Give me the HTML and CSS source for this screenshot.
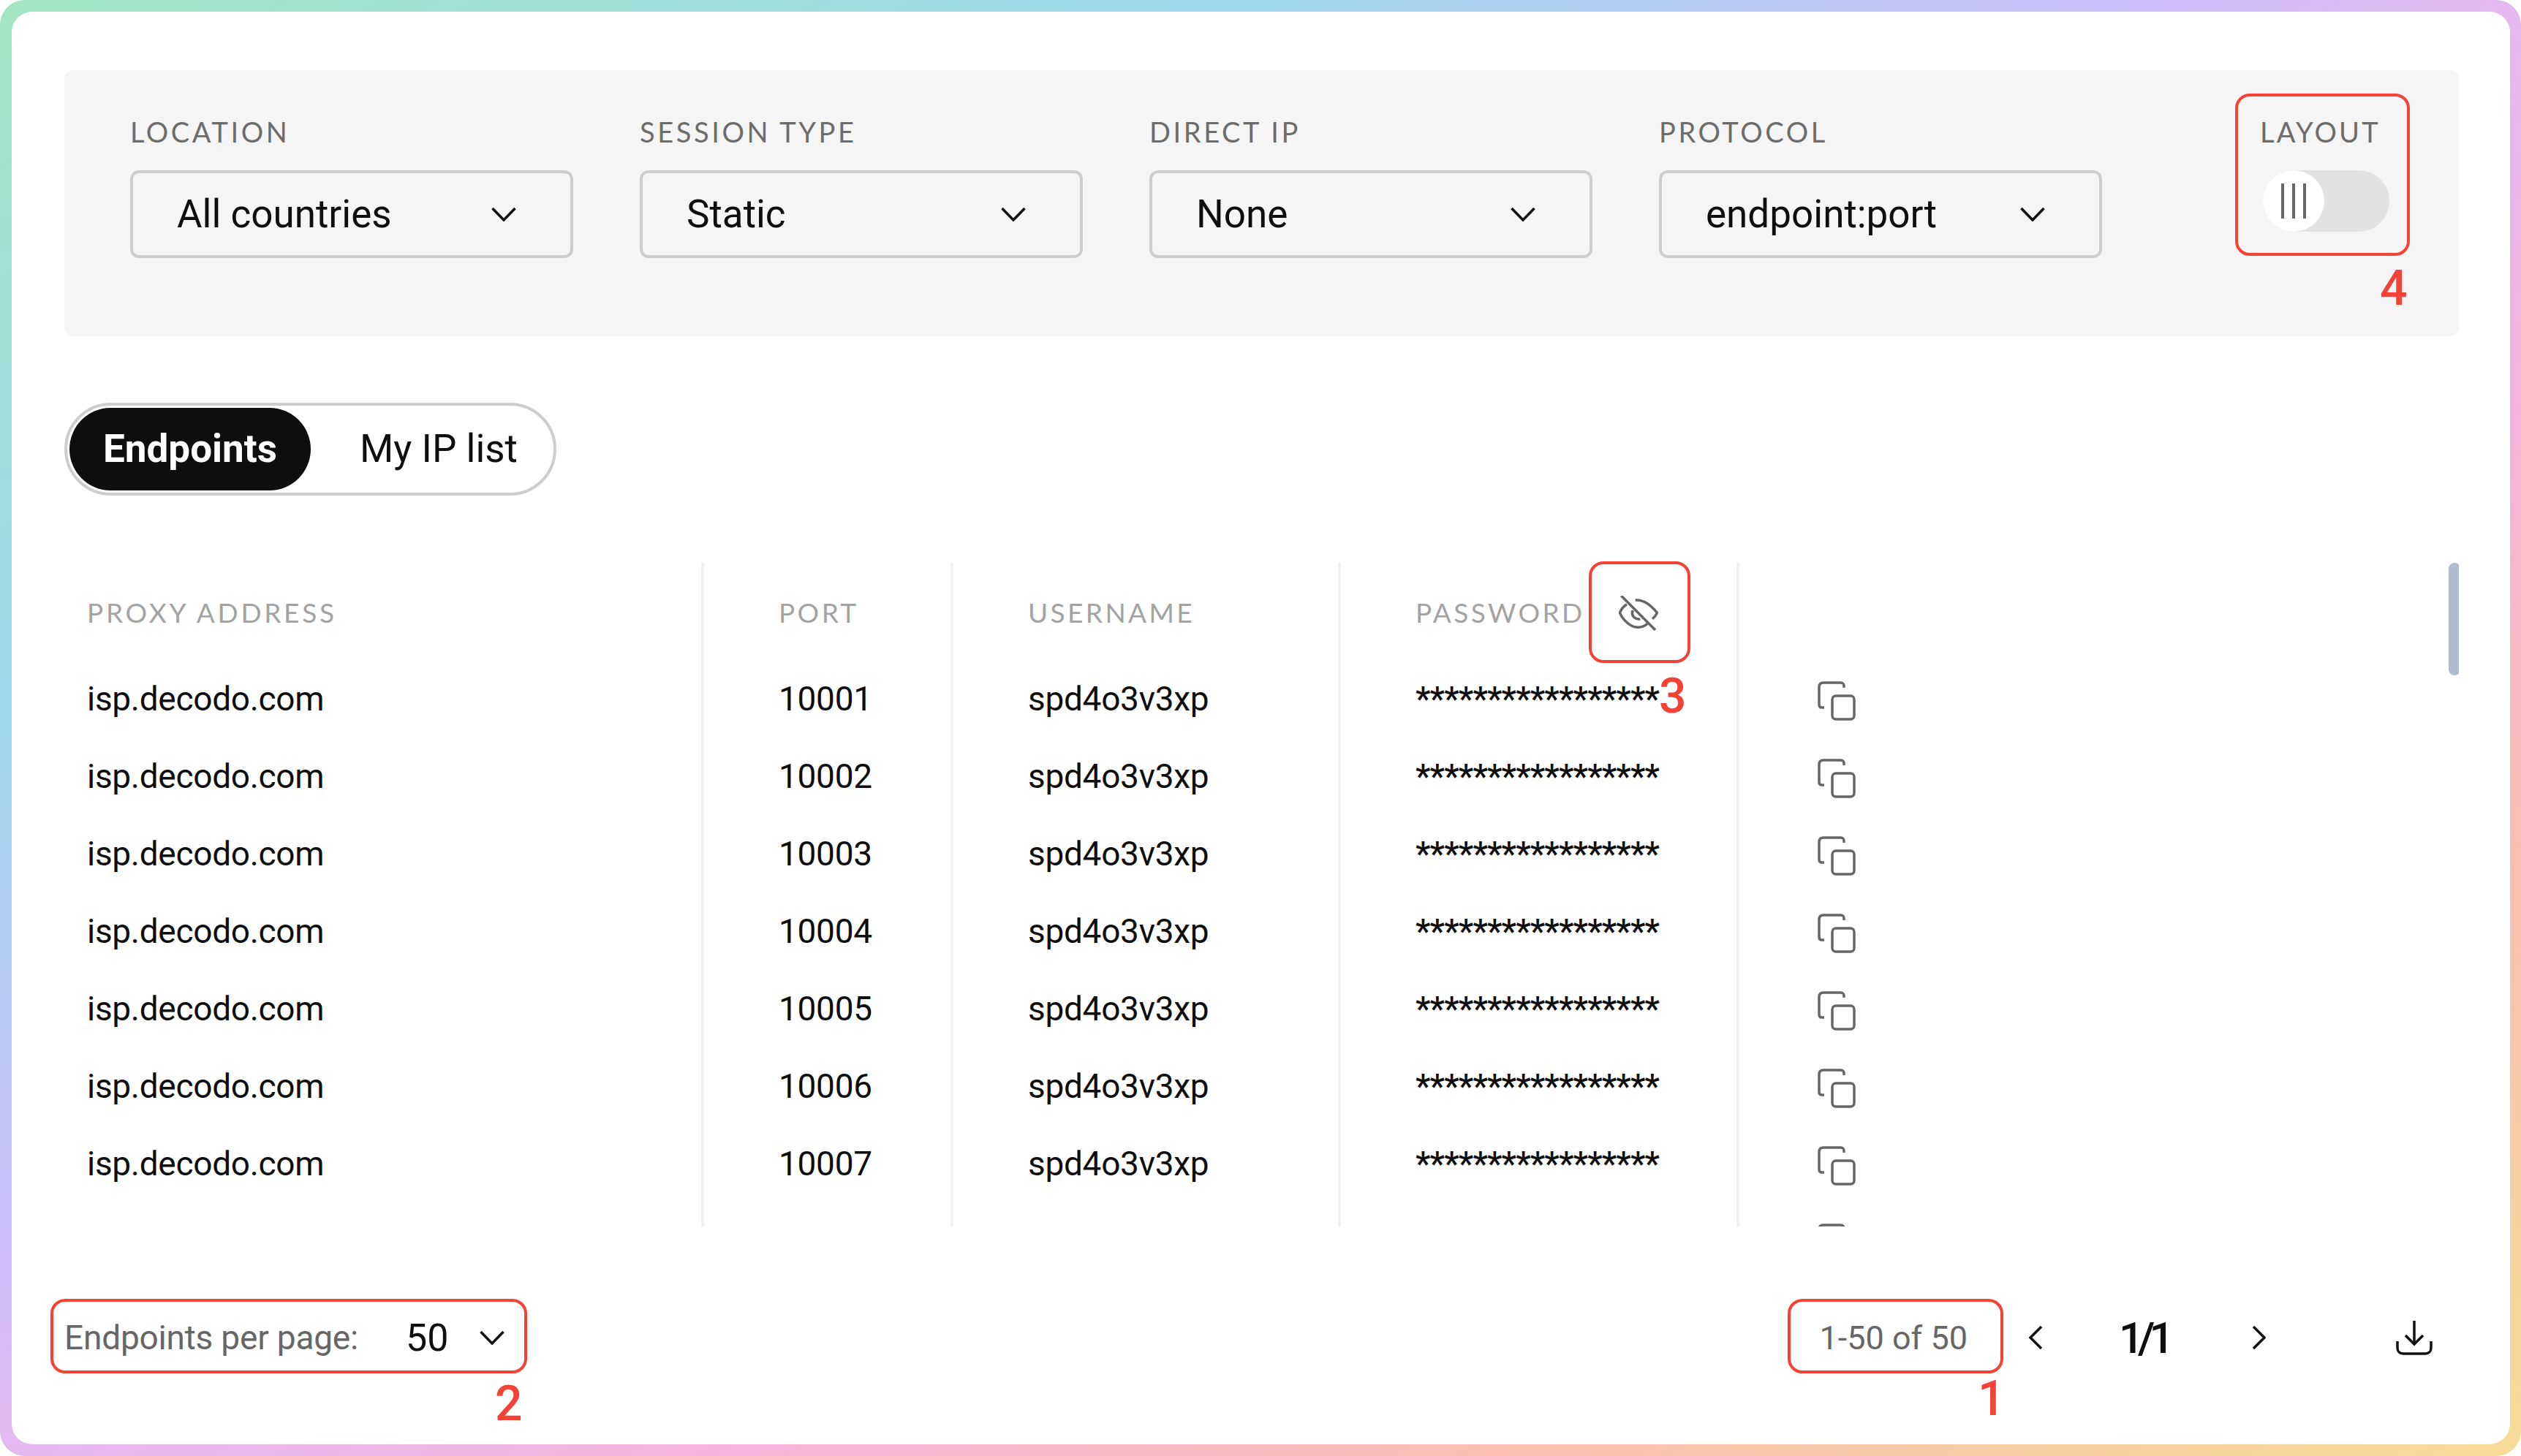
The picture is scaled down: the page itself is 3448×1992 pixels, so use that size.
FILE: index.html
```html
<!DOCTYPE html>
<html lang="en">
<head>
  <meta charset="UTF-8" />
  <title>Endpoints</title>
  <link rel="stylesheet" href="styles.css">
</head>
<body>
  <div class="frame">
    <div class="card">

      <!-- Filters -->
      <section class="filters">
        <div class="field">
          <label>LOCATION</label>
          <div class="select"><span>All countries</span><svg class="chev" viewBox="0 0 34 20"><path d="M1.5 2 17 18 32.500 2"/></svg></div>
        </div>
        <div class="field">
          <label>SESSION TYPE</label>
          <div class="select"><span>Static</span><svg class="chev" viewBox="0 0 34 20"><path d="M1.5 2 17 18 32.500 2"/></svg></div>
        </div>
        <div class="field">
          <label>DIRECT IP</label>
          <div class="select"><span>None</span><svg class="chev" viewBox="0 0 34 20"><path d="M1.5 2 17 18 32.500 2"/></svg></div>
        </div>
        <div class="field">
          <label>PROTOCOL</label>
          <div class="select"><span>endpoint:port</span><svg class="chev" viewBox="0 0 34 20"><path d="M1.5 2 17 18 32.500 2"/></svg></div>
        </div>
        <div class="field layout-field">
          <label>LAYOUT</label>
          <div class="toggle">
            <div class="knob"><i></i><i></i><i></i></div>
          </div>
        </div>
      </section>

      <!-- Tabs -->
      <div class="tabs">
        <a class="tab active">Endpoints</a>
        <a class="tab">My IP list</a>
      </div>

      <!-- Table -->
      <div class="table-wrap">
        <table>
          <colgroup>
            <col class="c1"><col class="c2"><col class="c3"><col class="c4"><col>
          </colgroup>
          <thead>
            <tr>
              <th class="first">PROXY ADDRESS</th>
              <th>PORT</th>
              <th>USERNAME</th>
              <th>PASSWORD<svg class="eye" viewBox="0 0 54 48"><path d="M11 11.700C6 15 3 19 1.500 23.300 4 30 14 43.300 26 43.300c5 0 10-2.300 13.300-5"/><path d="M22.700 6C35 5 45 14 52.500 23.300 51 27 49 29 46 31.700"/><path d="M19.300 20C17 25 19 32 29.300 32.300"/><path d="M3.300 0 50 47"/></svg></th>
              <th></th>
            </tr>
          </thead>
          <tbody id="rows"></tbody>
        </table>
        <div class="scroll-thumb"></div>
      </div>

      <!-- Footer -->
      <footer class="footer">
        <div class="per-page">
          <span class="per-label">Endpoints per page:</span>
          <span class="per-value">50</span>
          <svg class="chev" viewBox="0 0 34 20"><path d="M1.5 2 17 18 32.500 2"/></svg>
        </div>
        <div class="pager">
          <span class="count">1-50 of 50</span>
          <svg class="arrow arrow-left" viewBox="0 0 19 34"><path d="M17 2 2 17 17 32"/></svg>
          <span class="pages">1/1</span>
          <svg class="arrow arrow-right" viewBox="0 0 19 34"><path d="M2 2 17 17 2 32"/></svg>
          <svg class="download" viewBox="0 0 50 48"><path d="M25 1V33"/><path d="M13 21 25 33 37 21"/><path d="M2 29V38c0 5 3 8 8 8H40c5 0 8-3 8-8V29"/></svg>
        </div>
      </footer>

      <!-- Red annotations -->
      <div class="mark box-layout"></div>
      <div class="mark box-eye"></div>
      <div class="mark box-perpage"></div>
      <div class="mark box-count"></div>
      <span class="num num-4">4</span>
      <span class="num num-3">3</span>
      <span class="num num-2">2</span>
      <span class="num num-1">1</span>
    </div>
  </div>

  <script>
    const tbody = document.getElementById('rows');
    const copyIcon = '<svg class="copy" viewBox="0 0 52 54"><path d="M36 9V6c0-2-2-4-4-4H8C4 2 2 4 2 8V32c0 3 2 4 4 4h3"/><rect x="20" y="20" width="30" height="32" rx="5"/></svg>';
    for (let i = 1; i <= 8; i++) {
      const tr = document.createElement('tr');
      tr.innerHTML = `<td class="first">isp.decodo.com</td><td>${10000 + i}</td><td>spd4o3v3xp</td><td class="stars">*****************</td><td class="copy-cell">${copyIcon}</td>`;
      tbody.appendChild(tr);
    }
  </script>
</body>
</html>
```

FILE: styles.css
```css
* { margin: 0; padding: 0; box-sizing: border-box; }
body { font-family: 'Roboto', 'Liberation Sans', sans-serif; background: #fff; color: #0e0e0e; }

.frame { height: 1992px; padding: 16px 15px 16px 16px; border-radius: 34px; background: linear-gradient(to bottom right, #a3e5c3, #9fd8ee 25%, #cdbefb 43%, #e4b9f0 50%, #f5b4dc 64%, #f9bfb0 80%, #f6dc96); }
.card { position: relative; height: 100%; padding: 80px 70px 0 72px; background: #fff; border-radius: 28px; }

.filters { display: flex; gap: 91px; height: 364px; padding: 64px 95px 0 90px; background: #f5f5f5; border-radius: 12px; }
.field label { display: block; height: 40px; margin-bottom: 33px; font-family: 'Lato', sans-serif; font-size: 38px; line-height: 40px; letter-spacing: 3.6px; color: #6c6c6c; }
.select { display: flex; justify-content: space-between; align-items: center; width: 606px; height: 120px; padding: 0 74px 0 60px; border: 4px solid #cdcdcd; border-radius: 12px; font-size: 53px; }
.chev { width: 34px; height: 20px; fill: none; stroke: #111; stroke-width: 3.5; }

.layout-field { margin-left: auto; }
.layout-field label { letter-spacing: 3.2px; }
.toggle { width: 173px; height: 84px; margin: 3px 0 0 4px; background: #e2e2e2; border-radius: 42px; }
.knob { display: flex; justify-content: center; align-items: center; gap: 11px; width: 84px; height: 84px; background: #fff; border-radius: 50%; }
.knob i { width: 4px; height: 48px; background: #666; }

.tabs { display: flex; width: 673px; height: 127px; margin-top: 91px; padding: 3px; border: 4px solid #cdcdcd; border-radius: 64px; }
.tab { font-size: 53px; line-height: 113px; }
.tab.active { width: 330px; height: 113px; margin-right: 67px; text-align: center; background: #0e0e0e; color: #fff; font-weight: 700; border-radius: 57px; }

.table-wrap { position: relative; height: 908px; margin-top: 92px; overflow: hidden; }
table { width: 100%; border-collapse: collapse; table-layout: fixed; }
.c1 { width: 873px; }
.c2 { width: 341px; }
.c3 { width: 530px; }
.c4 { width: 545px; }
th, td { padding-left: 102px; text-align: left; border-right: 4px solid #f1f1f1; white-space: nowrap; }
th:last-child, td:last-child { border-right: none; }
th { height: 132px; padding-top: 3px; font-family: 'Lato', sans-serif; font-size: 37px; font-weight: 400; letter-spacing: 3.4px; color: #a3a3a3; }
td { height: 106px; padding-top: 2px; font-size: 46px; letter-spacing: -0.3px; }
th.first, td.first { padding-left: 31px; }
th.first { letter-spacing: 3.7px; }
.stars { letter-spacing: -0.8px; font-weight: 500; }
.copy-cell { padding-top: 0; padding-left: 107px; }
.copy { display: block; width: 52px; height: 54px; margin-top: 7px; fill: none; stroke: #666; stroke-width: 3.5; }
.eye { position: absolute; left: 2126px; top: 45px; width: 54px; height: 48px; fill: none; stroke: #666; stroke-width: 3.5; }
.scroll-thumb { position: absolute; top: 0; right: -2px; width: 16px; height: 154px; background: #b0bccc; border-radius: 8px; }

.footer { display: flex; justify-content: space-between; align-items: center; height: 102px; margin-top: 101px; padding: 0 36px 0 0; }
.per-page { display: flex; align-items: center; }
.per-label { width: 467px; font-size: 46px; letter-spacing: -0.2px; color: #666; }
.per-value { width: 101px; font-size: 52px; }
.pager { display: flex; align-items: center; }
.count { font-size: 45px; color: #666; }
.arrow { width: 19px; height: 34px; fill: none; stroke: #111; stroke-width: 3.5; }
.arrow-left { margin-left: 84px; }
.pages { width: 66px; margin: 0 116px 0 104px; font-size: 60px; font-weight: 500; letter-spacing: -8px; text-align: center; }
.download { width: 50px; height: 48px; margin-left: 178px; fill: none; stroke: #111; stroke-width: 3.5; }

.mark { position: absolute; border: 4px solid #f44336; border-radius: 20px; }
.box-layout { left: 3041px; top: 112px; width: 239px; height: 222px; }
.box-eye { left: 2157px; top: 752px; width: 139px; height: 139px; }
.box-perpage { left: 53px; top: 1761px; width: 652px; height: 102px; }
.box-count { left: 2429px; top: 1761px; width: 295px; height: 102px; }
.num { position: absolute; font-size: 66px; font-weight: 500; line-height: 64px; color: #f44336; }
.num-4 { left: 3239px; top: 347px; }
.num-3 { left: 2253px; top: 905px; }
.num-2 { left: 661px; top: 1873px; }
.num-1 { left: 2689px; top: 1866px; }
```
